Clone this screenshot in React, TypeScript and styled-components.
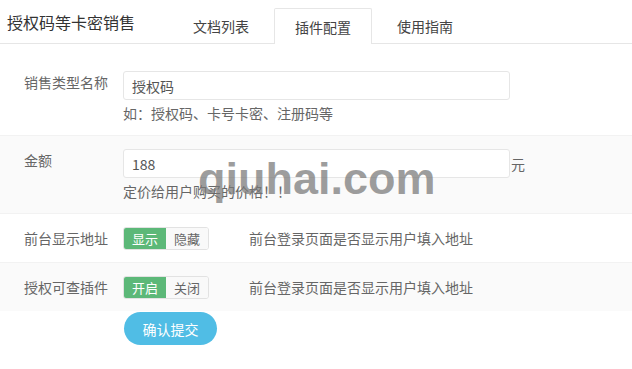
import styled, { createGlobalStyle } from "styled-components";

const GlobalStyle = createGlobalStyle`
	body {
		margin: 0;
		background: #ffffff;
		font-family: "Noto Sans CJK SC", "Liberation Sans", sans-serif;
	}
`;

const tabs = ["文档列表", "插件配置", "使用指南"];

export default function App() {
	return (
		<>
			<GlobalStyle />
			<Page>
				<Header>
					<Title>授权码等卡密销售</Title>
					<Tabs>
						{tabs.map((t) => (
							<Tab key={t} $active={t === "插件配置"}>
								{t}
							</Tab>
						))}
					</Tabs>
				</Header>
				<Form>
					<Row>
						<Label>销售类型名称</Label>
						<Field>
							<InputLine>
								<Input defaultValue="授权码" />
							</InputLine>
							<Hint>如：授权码、卡号卡密、注册码等</Hint>
						</Field>
					</Row>
					<Row $shade>
						<Label>金额</Label>
						<Field>
							<InputLine>
								<Input defaultValue="188" />
								<Unit>元</Unit>
							</InputLine>
							<Hint>定价给用户购买的价格！！</Hint>
						</Field>
					</Row>
					<Row>
						<Label>前台显示地址</Label>
						<Toggle>
							<Seg $on>显示</Seg>
							<Seg>隐藏</Seg>
						</Toggle>
						<Desc>前台登录页面是否显示用户填入地址</Desc>
					</Row>
					<Row $shade $last>
						<Label>授权可查插件</Label>
						<Toggle>
							<Seg $on>开启</Seg>
							<Seg>关闭</Seg>
						</Toggle>
						<Desc>前台登录页面是否显示用户填入地址</Desc>
					</Row>
					<Actions>
						<Submit>确认提交</Submit>
					</Actions>
				</Form>
				<Watermark>qiuhai.com</Watermark>
			</Page>
		</>
	);
}

const Page = styled.div`
	position: relative;
	width: 632px;
	height: 369px;
	overflow: hidden;
`;

const Header = styled.div`
	display: flex;
	align-items: flex-end;
	height: 44px;
	border-bottom: 1px solid #e6e6e6;
	box-sizing: border-box;
`;

const Title = styled.div`
	width: 172px;
	padding-left: 7px;
	box-sizing: border-box;
	align-self: center;
	font-size: 16px;
	color: #333333;
	white-space: nowrap;
`;

const Tabs = styled.div`
	display: flex;
	gap: 4px;
`;

const Tab = styled.div<{ $active?: boolean }>`
	width: 98px;
	box-sizing: border-box;
	display: flex;
	align-items: center;
	justify-content: center;
	font-size: 14px;
	color: #444444;
	background: #ffffff;
	border: 1px solid ${(p) => (p.$active ? "#e6e6e6" : "transparent")};
	border-bottom: none;
	border-radius: 2px 2px 0 0;
	margin-bottom: ${(p) => (p.$active ? "-1px" : "0")};
	height: ${(p) => (p.$active ? "36px" : "35px")};
`;

const Form = styled.div`
	padding-top: 14px;
`;

const Row = styled.div<{ $shade?: boolean; $last?: boolean }>`
	display: flex;
	align-items: flex-start;
	padding: 13px 0 12px 24px;
	background: ${(p) => (p.$shade ? "#fafafa" : "#ffffff")};
	border-bottom: ${(p) => (p.$last ? "none" : "1px solid #f2f2f2")};
`;

const Label = styled.div`
	width: 99px;
	flex-shrink: 0;
	font-size: 14px;
	line-height: 23px;
	color: #666666;
`;

const Field = styled.div`
	display: flex;
	flex-direction: column;
`;

const InputLine = styled.div`
	display: flex;
	align-items: center;
`;

const Input = styled.input`
	width: 387px;
	height: 29px;
	box-sizing: border-box;
	border: 1px solid #e6e6e6;
	border-radius: 3px;
	padding: 0 8px;
	font-family: "Noto Sans CJK SC", "Liberation Sans", sans-serif;
	font-size: 14px;
	color: #555555;
	background: #ffffff;
	outline: none;
`;

const Unit = styled.span`
	margin-left: 1px;
	font-size: 14px;
	color: #666666;
`;

const Hint = styled.div`
	margin-top: 3px;
	font-size: 14px;
	line-height: 20px;
	color: #666666;
`;

const Toggle = styled.div`
	display: flex;
	border: 1px solid #e2e2e2;
	border-radius: 3px;
	overflow: hidden;
`;

const Seg = styled.div<{ $on?: boolean }>`
	width: 42px;
	height: 21px;
	display: flex;
	align-items: center;
	justify-content: center;
	font-size: 13px;
	color: ${(p) => (p.$on ? "#ffffff" : "#666666")};
	background: ${(p) => (p.$on ? "#5cb878" : "#f9f9f9")};
`;

const Desc = styled.div`
	margin-left: 40px;
	font-size: 14px;
	line-height: 23px;
	color: #666666;
`;

const Actions = styled.div`
	padding: 1px 0 0 124px;
`;

const Submit = styled.button`
	width: 93px;
	height: 33px;
	border: none;
	border-radius: 17px;
	background: #50bde5;
	color: #ffffff;
	font-family: "Noto Sans CJK SC", "Liberation Sans", sans-serif;
	font-size: 14px;
	cursor: pointer;
`;

const Watermark = styled.div`
	position: absolute;
	left: 198px;
	top: 156px;
	font-family: "Liberation Sans", Arial, sans-serif;
	font-weight: bold;
	font-size: 45px;
	line-height: 1;
	color: rgba(120, 120, 120, 0.72);
	pointer-events: none;
`;
